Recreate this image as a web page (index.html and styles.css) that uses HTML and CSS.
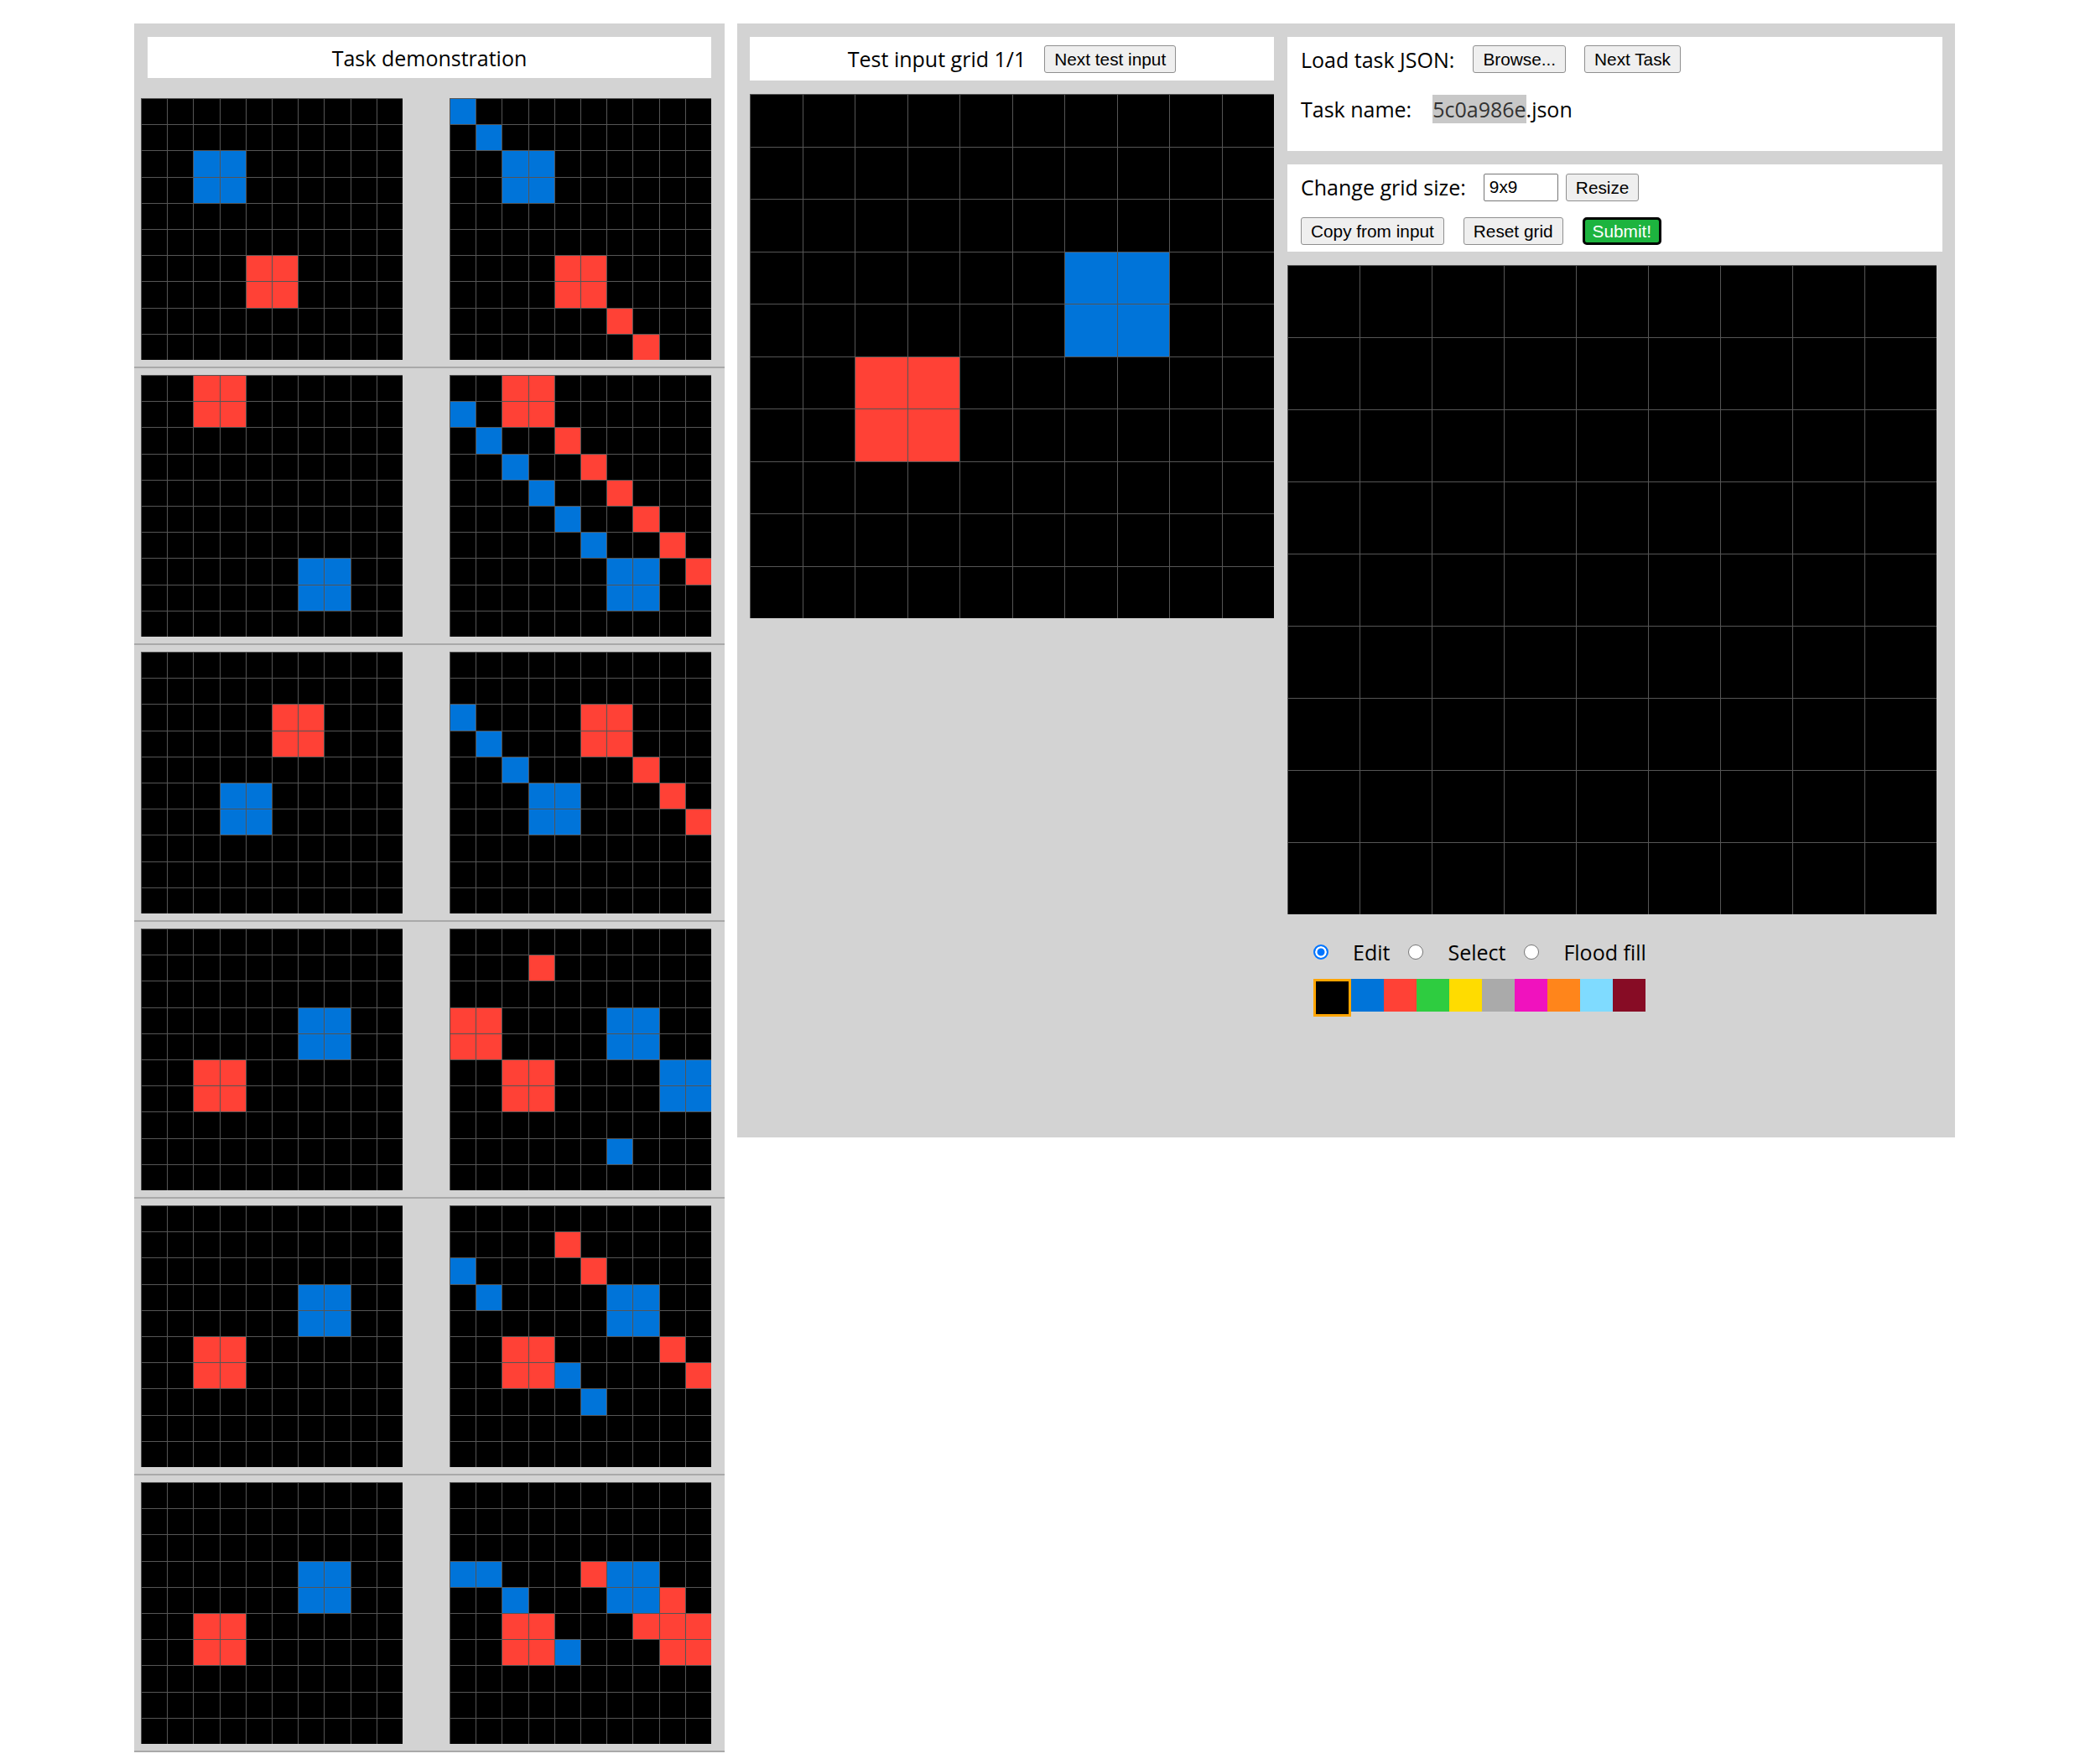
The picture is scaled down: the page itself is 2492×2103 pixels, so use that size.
FILE: index.html
```html
<!DOCTYPE html>
<html lang="en">
<head>
<meta charset="utf-8">
<title>ARC testing interface</title>
<link rel="stylesheet" href="styles.css">
</head>
<body>
<div class="workspace">
  <section class="demo-panel">
    <div class="title-box">Task demonstration</div>
    <div id="task-preview"></div>
  </section>
  <section class="eval-panel">
    <div class="input-col">
      <div class="test-header">
        <span>Test input grid 1/1</span>
        <button class="btn">Next test input</button>
      </div>
      <div id="test-input"></div>
    </div>
    <div class="editor-col">
      <div class="box load-box">
        <div class="row load-row">
          <label>Load task JSON:</label>
          <button class="btn">Browse...</button>
          <button class="btn">Next Task</button>
        </div>
        <p class="task-name"><span class="task-label">Task name:</span><span class="sel">5c0a986e</span>.json</p>
      </div>
      <div class="box resize-box">
        <div class="row size-row">
          <label class="size-label">Change grid size:</label>
          <input class="size-field" type="text" value="9x9">
          <button class="btn">Resize</button>
        </div>
        <div class="row action-row">
          <button class="btn">Copy from input</button>
          <button class="btn">Reset grid</button>
          <button class="btn btn-submit">Submit!</button>
        </div>
      </div>
      <div id="output-grid"></div>
      <div class="toolbar">
        <input class="radio" type="radio" name="tool" id="tool_edit" checked>
        <label class="tool-label" for="tool_edit">Edit</label>
        <input class="radio" type="radio" name="tool" id="tool_select">
        <label class="tool-label" for="tool_select">Select</label>
        <input class="radio" type="radio" name="tool" id="tool_fill">
        <label class="tool-label" for="tool_fill">Flood fill</label>
      </div>
      <div class="palette">
        <div class="swatch s0 selected"></div>
        <div class="swatch s1"></div>
        <div class="swatch s2"></div>
        <div class="swatch s3"></div>
        <div class="swatch s4"></div>
        <div class="swatch s5"></div>
        <div class="swatch s6"></div>
        <div class="swatch s7"></div>
        <div class="swatch s8"></div>
        <div class="swatch s9"></div>
      </div>
    </div>
  </section>
</div>
<script src="script.js"></script>
</body>
</html>
```

FILE: styles.css
```css
* { box-sizing: border-box; }

body {
  margin: 0;
  background: #ffffff;
  font-family: "Open Sans", "Liberation Sans", sans-serif;
  font-size: 25px;
  color: #000;
}

.workspace {
  display: flex;
  align-items: flex-start;
  gap: 15px;
  width: 2171px;
  margin: 28px 0 0 160px;
}

/* ---------- demonstration panel ---------- */
.demo-panel {
  flex: none;
  width: 704px;
  background: #d3d3d3;
  padding-top: 16px;
}

.title-box {
  margin: 0 16px 16px;
  height: 49px;
  background: #fff;
  display: flex;
  align-items: center;
  justify-content: center;
}

.pair {
  display: flex;
  justify-content: space-between;
  padding: 8px 16px 8px 8px;
  border-bottom: 2px solid #a9a9a9;
}

/* ---------- grids ---------- */
.grid {
  display: grid;
  background: #000;
}

.grid-10 {
  grid-template-columns: repeat(10, 1fr);
  grid-template-rows: repeat(10, 1fr);
}

.grid-9 {
  grid-template-columns: repeat(9, 1fr);
  grid-template-rows: repeat(9, 1fr);
}

.grid-demo { width: 312px; height: 312px; }
.grid-input { width: 625px; height: 625px; }
.grid-output { width: 774px; height: 774px; margin-top: 16px; }

.cell {
  border-top: 1px solid #555;
  border-left: 1px solid #555;
}

.s0 { background: #000000; }
.s1 { background: #0074D9; }
.s2 { background: #FF4136; }
.s3 { background: #2ECC40; }
.s4 { background: #FFDC00; }
.s5 { background: #AAAAAA; }
.s6 { background: #F012BE; }
.s7 { background: #FF851B; }
.s8 { background: #7FDBFF; }
.s9 { background: #870C25; }

/* ---------- evaluation panel ---------- */
.eval-panel {
  flex: none;
  width: 1452px;
  height: 1328px;
  background: #d3d3d3;
  padding: 16px 15px;
  display: flex;
  gap: 16px;
  align-items: flex-start;
}

.input-col {
  width: 625px;
  display: flex;
  flex-direction: column;
  gap: 16px;
}

.test-header {
  height: 52px;
  background: #fff;
  display: flex;
  align-items: center;
  justify-content: center;
  gap: 22px;
}

.editor-col {
  width: 781px;
  display: flex;
  flex-direction: column;
}

.box {
  background: #fff;
  padding: 0 16px;
}

.row {
  display: flex;
  align-items: center;
}

.load-box {
  height: 136px;
  padding-top: 9px;
}

.load-row {
  height: 35px;
  gap: 22px;
}

.task-name {
  margin: 25px 0 0;
  line-height: 34px;
}

.task-label { margin-right: 25px; }

.sel {
  background: #c8c8c8;
  color: #333;
}

.resize-box {
  margin-top: 16px;
  height: 104px;
  padding-top: 10px;
}

.size-row { height: 34px; }
.size-label { margin-right: 21px; }

.action-row {
  margin-top: 19px;
  gap: 23px;
}

.btn {
  font-family: "Liberation Sans", Arial, sans-serif;
  font-size: 20.8px;
  height: 33px;
  line-height: 31px;
  padding: 0 11px;
  margin: 0;
  background: #efefef;
  border: 1px solid #8f8f8f;
  border-radius: 3px;
  color: #000;
}

.size-field {
  width: 89px;
  height: 33px;
  margin: 0 9px 0 0;
  padding: 0 6px;
  font-family: "Liberation Sans", Arial, sans-serif;
  font-size: 20.8px;
  border: 1px solid #767676;
  border-radius: 2px;
  background: #fff;
  color: #000;
}

.btn-submit {
  background: #1db43f;
  color: #fff;
  border: 3px solid #000;
  border-radius: 5px;
  padding: 0 9px;
  line-height: 27px;
}

/* ---------- toolbar & palette ---------- */
.toolbar {
  margin-top: 28px;
  padding-left: 31px;
  height: 34px;
  display: flex;
  align-items: center;
}

.radio {
  appearance: none;
  -webkit-appearance: none;
  width: 18px;
  height: 18px;
  margin: 0 29px 0 0;
  border-radius: 50%;
  border: 1.5px solid #767676;
  background: #fff;
  flex: none;
}

.radio:checked {
  border: 2px solid #0075ff;
  background: #0075ff;
  box-shadow: inset 0 0 0 2.5px #fff;
}

.tool-label { margin-right: 22px; }

.palette {
  margin-top: 15px;
  padding-left: 31px;
  display: flex;
  align-items: flex-start;
}

.swatch {
  width: 39px;
  height: 39px;
}

.swatch.selected {
  width: 45px;
  height: 45px;
  border: 3px solid #ffa500;
}
```

FILE: script.js
```js
var Z = "0000000000";
var demos = [
  [
    [Z, Z, "0011000000", "0011000000", Z, Z, "0000220000", "0000220000", Z, Z],
    ["1000000000", "0100000000", "0011000000", "0011000000", Z, Z, "0000220000", "0000220000", "0000002000", "0000000200"]
  ],
  [
    ["0022000000", "0022000000", Z, Z, Z, Z, Z, "0000001100", "0000001100", Z],
    ["0022000000", "1022000000", "0100200000", "0010020000", "0001002000", "0000100200", "0000010020", "0000001102", "0000001100", Z]
  ],
  [
    [Z, Z, "0000022000", "0000022000", Z, "0001100000", "0001100000", Z, Z, Z],
    [Z, Z, "1000022000", "0100022000", "0010000200", "0001100020", "0001100002", Z, Z, Z]
  ],
  [
    [Z, Z, Z, "0000001100", "0000001100", "0022000000", "0022000000", Z, Z, Z],
    [Z, "0002000000", Z, "2200001100", "2200001100", "0022000011", "0022000011", Z, "0000001000", Z]
  ],
  [
    [Z, Z, Z, "0000001100", "0000001100", "0022000000", "0022000000", Z, Z, Z],
    [Z, "0000200000", "1000020000", "0100001100", "0000001100", "0022000020", "0022100002", "0000010000", Z, Z]
  ],
  [
    [Z, Z, Z, "0000001100", "0000001100", "0022000000", "0022000000", Z, Z, Z],
    [Z, Z, Z, "1100021100", "0010001120", "0022000222", "0022100022", Z, Z, Z]
  ]
];

var testInput = [Z, Z, Z, "0000001100", "0000001100", "0022000000", "0022000000", Z, Z, Z];
var O = "000000000";
var outputGrid = [O, O, O, O, O, O, O, O, O];

function makeGrid(rows, extra) {
  var g = document.createElement("div");
  g.className = "grid grid-" + rows.length + " " + extra;
  rows.forEach(function (r) {
    for (var i = 0; i < r.length; i++) {
      var c = document.createElement("div");
      c.className = "cell s" + r[i];
      g.appendChild(c);
    }
  });
  return g;
}

var preview = document.getElementById("task-preview");
demos.forEach(function (p) {
  var pair = document.createElement("div");
  pair.className = "pair";
  pair.appendChild(makeGrid(p[0], "grid-demo"));
  pair.appendChild(makeGrid(p[1], "grid-demo"));
  preview.appendChild(pair);
});

var ti = document.getElementById("test-input");
ti.replaceWith(makeGrid(testInput, "grid-input"));

var og = document.getElementById("output-grid");
og.replaceWith(makeGrid(outputGrid, "grid-output"));
```
